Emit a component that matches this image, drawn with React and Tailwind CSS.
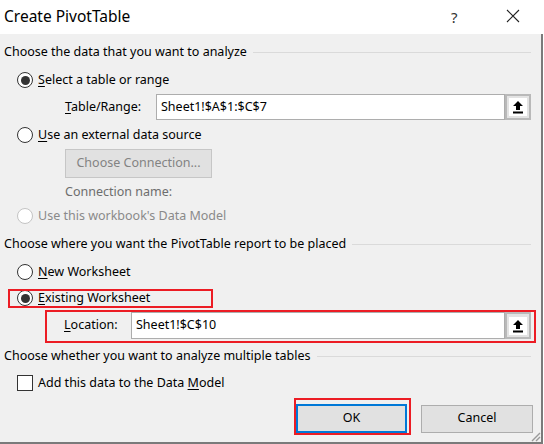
import React from "react";

const U = ({ children }) => <span className="underline underline-offset-2">{children}</span>;

function Radio({ checked, disabled }) {
  return (
    <span
      className={`flex h-4 w-4 items-center justify-center rounded-full border bg-white ${disabled ? "border-[#c4c4c4]" : "border-[#333]"}`}
    >
      {checked && <span className="h-[9px] w-[9px] rounded-full bg-[#333]" />}
    </span>
  );
}

function Upload() {
  return (
    <div className="flex h-full w-[26px] items-center justify-center border-2 border-[#b9b9b9] bg-[#e3e3e3]">
      <div className="flex h-[18px] w-[18px] items-center justify-center bg-white">
        <svg width="12" height="14" viewBox="0 0 12 14">
          <path d="M6 1 L11 6 L8 6 L8 10 L4 10 L4 6 L1 6 Z" fill="#000" />
          <rect x="1" y="11.5" width="10" height="2" fill="#000" />
        </svg>
      </div>
    </div>
  );
}

function Header({ children }) {
  return (
    <div className="flex h-5 items-center pl-[4px] pr-[10px]">
      <span>{children}</span>
      <div className="ml-[6px] h-px flex-1 bg-[#dadada]" />
    </div>
  );
}

export default function App() {
  return (
    <div
      className="h-[444px] w-[544px] overflow-hidden bg-white text-[12.5px] text-black"
      style={{ fontFamily: '"Noto Sans", "Open Sans", sans-serif' }}
    >
      {/* title bar */}
      <div className="relative flex h-[34px] items-center bg-white pl-[4px]">
        <span className="text-[15.5px]">Create PivotTable</span>
        <span className="absolute left-[451px] top-[6px] text-[15px] text-[#333]">?</span>
        <svg className="absolute left-[506px] top-[9px]" width="14" height="14" viewBox="0 0 14 14">
          <path d="M1 1 L13 13 M13 1 L1 13" stroke="#222" strokeWidth="1.1" />
        </svg>
      </div>

      {/* body */}
      <div className="relative flex h-[410px] w-[543px] flex-col border-b-2 border-r-2 border-[#7a7a7a] bg-[#f0f0f0] pt-2">
        <Header>Choose the data that you want to analyze</Header>

        <div className="mt-2 flex h-5 items-center gap-[5px] pl-[17px]">
          <Radio checked />
          <span><U>S</U>elect a table or range</span>
        </div>

        <div className="mt-1 flex h-[26px] items-center pl-[65px] pr-[10px]">
          <span className="w-[91px]"><U>T</U>able/Range:</span>
          <div className="flex h-full flex-1 items-center border border-[#adadad] bg-white pl-[4px]">Sheet1!$A$1:$C$7</div>
          <Upload />
        </div>

        <div className="mt-[5px] flex h-5 items-center gap-[5px] pl-[17px]">
          <Radio />
          <span><U>U</U>se an external data source</span>
        </div>

        <div className="mt-1 pl-[65px]">
          <div className="flex h-[29px] w-[147px] items-center justify-center border border-[#c6c6c6] bg-[#e1e1e1] text-[#838383]">
            Choose Connection...
          </div>
        </div>

        <div className="mt-[6px] flex h-4 items-center pl-[65px] text-[#6d6d6d]">Connection name:</div>

        <div className="mt-[6px] flex h-5 items-center gap-[5px] pl-[17px] text-[#8a8a8a]">
          <Radio disabled />
          <span>Use this workbook's Data Model</span>
        </div>

        <div className="mt-2">
          <Header>Choose where you want the PivotTable report to be placed</Header>
        </div>

        <div className="mt-2 flex h-5 items-center gap-[5px] pl-[17px]">
          <Radio />
          <span><U>N</U>ew Worksheet</span>
        </div>

        <div className="relative mt-[6px] flex h-5 items-center gap-[5px] pl-[17px]">
          <Radio checked />
          <span><U>E</U>xisting Worksheet</span>
          <div className="absolute left-[8px] top-[1px] h-[19px] w-[205px] border-2 border-[#ec1c24]" />
        </div>

        <div className="relative mt-[2px] flex h-[33px] pb-[4px] pl-[64px] pr-[10px] pt-[2px]">
          <div className="flex h-full w-[67px] items-center"><span><U>L</U>ocation:</span></div>
          <div className="flex h-full flex-1 items-center border border-[#adadad] bg-white pl-[4px]">Sheet1!$C$10</div>
          <Upload />
          <div className="absolute left-[45px] top-0 h-[33px] w-[491px] border-2 border-[#ec1c24]" />
        </div>

        <div className="mt-[3px]">
          <Header>Choose whether you want to analyze multiple tables</Header>
        </div>

        <div className="mt-[7px] flex h-5 items-center gap-[5px] pl-[17px]">
          <span className="h-4 w-4 border border-[#333] bg-white" />
          <span>Add this data to the Data <U>M</U>odel</span>
        </div>

        <div className="relative mt-[11px] flex h-[29px] items-center pl-[296px]">
          <div className="flex h-[29px] w-[111px] items-center justify-center border-2 border-[#0078d7] bg-[#e1e1e1]">OK</div>
          <div className="ml-[14px] flex h-[28px] w-[112px] items-center justify-center border border-[#adadad] bg-[#e1e1e1]">Cancel</div>
          <div className="absolute left-[294px] top-[-6px] h-[37px] w-[117px] border-2 border-[#ec1c24]" />
        </div>

        <svg className="absolute bottom-0 right-0" width="12" height="12" viewBox="0 0 12 12">
          <path d="M11 3 L3 11 M11 7 L7 11" stroke="#9a9a9a" strokeWidth="1.4" />
        </svg>
      </div>
    </div>
  );
}
